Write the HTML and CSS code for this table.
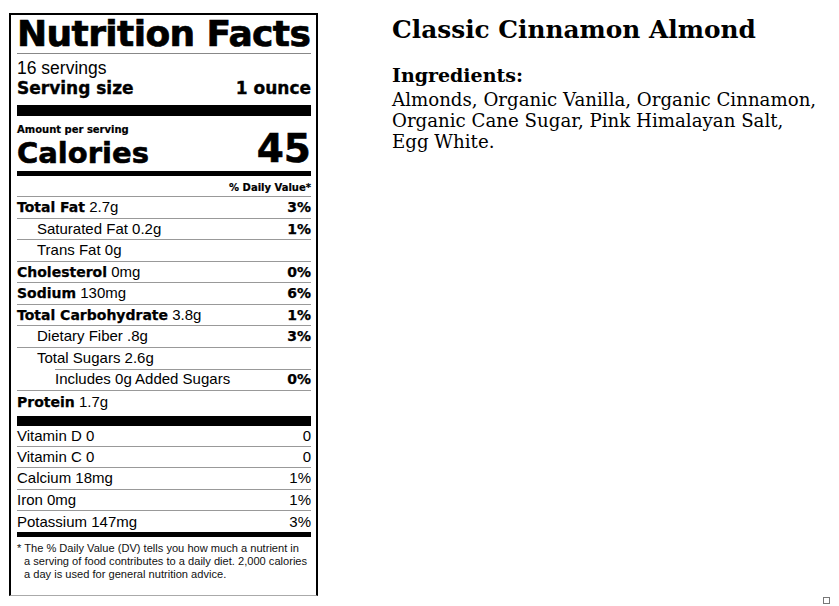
FILE: index.html
```html
<!DOCTYPE html>
<html>
<head>
<meta charset="utf-8">
<link rel="stylesheet" href="styles.css">
</head>
<body>
<div class="page">
  <section class="label">
    <h1 class="nf-title">Nutrition Facts</h1>
    <div class="servings">16 servings</div>
    <div class="serving-size"><span>Serving size</span><span>1 ounce</span></div>
    <div class="amount">Amount per serving</div>
    <div class="calories"><span class="cal-word">Calories</span><span class="cal-num">45</span></div>
    <div class="dv-head">% Daily Value*</div>
    <div class="row"><span><b>Total Fat</b> 2.7g</span><b>3%</b></div>
    <div class="row ind1"><span>Saturated Fat 0.2g</span><b>1%</b></div>
    <div class="row ind1"><span>Trans Fat 0g</span></div>
    <div class="row"><span><b>Cholesterol</b> 0mg</span><b>0%</b></div>
    <div class="row"><span><b>Sodium</b> 130mg</span><b>6%</b></div>
    <div class="row"><span><b>Total Carbohydrate</b> 3.8g</span><b>1%</b></div>
    <div class="row ind1"><span>Dietary Fiber .8g</span><b>3%</b></div>
    <div class="row ind1 nobottom"><span>Total Sugars 2.6g</span></div>
    <div class="row ind2 split"><span>Includes 0g Added Sugars</span><b>0%</b></div>
    <div class="row protein"><span><b>Protein</b> 1.7g</span></div>
    <div class="row vit"><span>Vitamin D 0</span><span>0</span></div>
    <div class="row vit"><span>Vitamin C 0</span><span>0</span></div>
    <div class="row vit"><span>Calcium 18mg</span><span>1%</span></div>
    <div class="row vit"><span>Iron 0mg</span><span>1%</span></div>
    <div class="row vit last"><span>Potassium 147mg</span><span>3%</span></div>
    <p class="foot">* The % Daily Value (DV) tells you how much a nutrient in<br>a serving of food contributes to a daily diet. 2,000 calories<br>a day is used for general nutrition advice.</p>
  </section>
  <section class="info">
    <h2 class="product">Classic Cinnamon Almond</h2>
    <h3 class="ing-title">Ingredients:</h3>
    <p class="ing">Almonds, Organic Vanilla, Organic Cinnamon,<br>Organic Cane Sugar, Pink Himalayan Salt,<br>Egg White.</p>
  </section>
  <div class="corner"></div>
</div>
</body>
</html>
```
FILE: styles.css
```css
html, body {
  margin: 0;
  padding: 0;
  background: #fff;
}
.page {
  position: relative;
  width: 839px;
  height: 606px;
  display: flex;
  align-items: flex-start;
}
.label {
  margin: 13px 0 0 9px;
  width: 294px;
  height: 580px;
  padding: 0 5px 0 6px;
  border: 2px solid #000;
  border-bottom: 1px solid #aaa;
  font-family: "Liberation Sans", Arial, sans-serif;
  color: #000;
  box-sizing: content-box;
}
.label b {
  font-family: "DejaVu Sans", sans-serif;
  font-weight: 700;
  -webkit-text-stroke: 0.25px #000;
}
.nf-title {
  margin: 0;
  font-family: "DejaVu Sans", sans-serif;
  font-size: 36px;
  line-height: 38px;
  height: 38px;
  font-weight: 700;
  letter-spacing: -0.6px;
  -webkit-text-stroke: 0.7px #000;
  border-bottom: 1px solid #888;
  white-space: nowrap;
}
.servings {
  font-size: 17.5px;
  line-height: 20px;
  margin-top: 4px;
}
.serving-size {
  display: flex;
  justify-content: space-between;
  font-family: "DejaVu Sans", sans-serif;
  font-size: 17px;
  font-weight: 700;
  -webkit-text-stroke: 0.35px #000;
  line-height: 20px;
  padding-bottom: 7px;
  border-bottom: 11px solid #000;
}
.amount {
  font-family: "DejaVu Sans", sans-serif;
  font-size: 10px;
  font-weight: 700;
  -webkit-text-stroke: 0.2px #000;
  line-height: 12px;
  margin-top: 8px;
}
.calories {
  display: flex;
  justify-content: space-between;
  align-items: flex-end;
  font-family: "DejaVu Sans", sans-serif;
  font-weight: 700;
  -webkit-text-stroke: 0.6px #000;
  height: 32px;
  padding-bottom: 3px;
  border-bottom: 5px solid #000;
}
.cal-word {
  font-size: 29px;
  line-height: 30px;
}
.cal-num {
  font-size: 39px;
  line-height: 38px;
}
.dv-head {
  text-align: right;
  font-family: "DejaVu Sans", sans-serif;
  font-size: 10px;
  font-weight: 700;
  -webkit-text-stroke: 0.2px #000;
  line-height: 14px;
  height: 15px;
  padding-top: 5px;
  border-bottom: 1px solid #999;
}
.row {
  display: flex;
  justify-content: space-between;
  align-items: center;
  height: 20.5px;
  font-size: 15px;
  line-height: 20px;
  border-bottom: 1px solid #999;
  white-space: nowrap;
}
.row b { font-size: 14px; }
.ind1 { padding-left: 20px; }
.ind2 { padding-left: 38px; }
.nobottom { border-bottom: none; height: 21.5px; }
.split {
  background: linear-gradient(#999, #999) no-repeat 38px 0 / calc(100% - 38px) 1px;
}
.protein {
  height: 22px;
  padding-bottom: 3px;
  border-bottom: 10px solid #000;
}
.vit { height: 20.4px; }
.vit.last { height: 21px; border-bottom: 5px solid #000; }
.foot {
  margin: 5px 0 0;
  font-size: 11.1px;
  line-height: 12.8px;
  padding-left: 7px;
  text-indent: -7px;
  color: #111;
  white-space: nowrap;
}
.info {
  margin: 15px 0 0 74px;
  font-family: "DejaVu Serif", "Liberation Serif", serif;
  color: #000;
}
.product {
  margin: 0;
  font-size: 24.8px;
  line-height: 30px;
  font-weight: 700;
  white-space: nowrap;
}
.ing-title {
  margin: 19px 0 0;
  font-size: 19px;
  line-height: 23px;
  font-weight: 700;
}
.ing {
  margin: 2px 0 0;
  font-size: 18.2px;
  line-height: 21px;
  white-space: nowrap;
}
.corner {
  position: absolute;
  left: 823px;
  top: 597px;
  width: 5px;
  height: 5px;
  border: 1px solid #777;
}
```
